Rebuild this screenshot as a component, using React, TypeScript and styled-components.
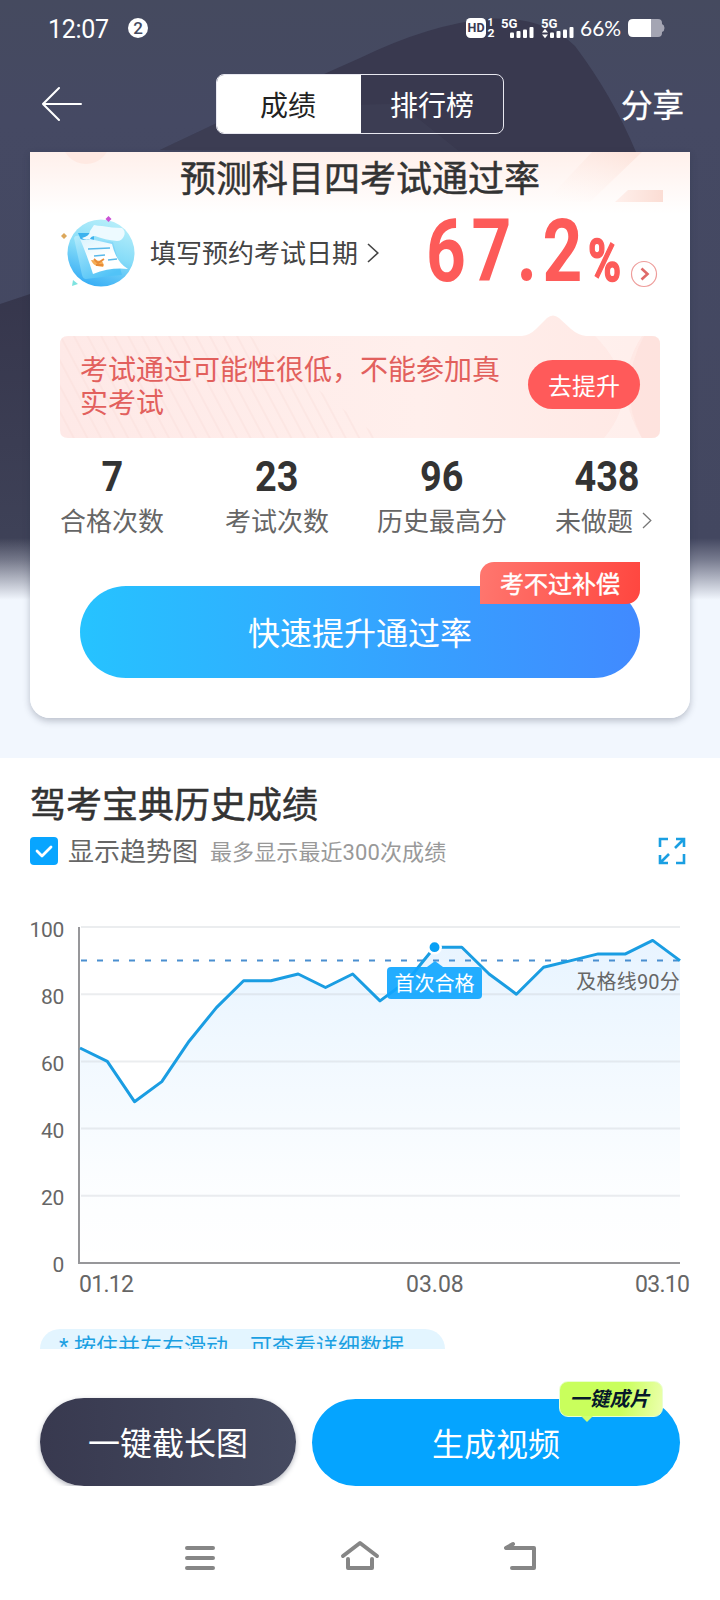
import React from "react";
import styled, { createGlobalStyle } from "styled-components";

const GlobalStyle = createGlobalStyle`
  * { box-sizing: border-box; }
  body {
    margin: 0;
    background: #fff;
    font-family: Roboto, "Noto Sans CJK SC", sans-serif;
    color: #333;
  }
  svg { display: block; flex: none; }
`;

const Screen = styled.div`
  width: 720px;
  height: 1600px;
  display: flex;
  flex-direction: column;
  overflow: hidden;
  background: #fff;
`;

/* ---------- hero ---------- */

const Hero = styled.section`
  position: relative;
  flex: none;
  height: 758px;
  background: #f2f7fe;
`;

const Backdrop = styled.svg`
  position: absolute;
  left: 0;
  top: 0;
`;

const HeroContent = styled.div`
  position: relative;
  display: flex;
  flex-direction: column;
`;

const StatusBar = styled.div`
  display: flex;
  align-items: center;
  justify-content: space-between;
  height: 56px;
  padding: 0 55px 0 48px;
  color: #fff;
`;

const StatusSide = styled.div`
  display: flex;
  align-items: center;
`;

const Clock = styled.span`
  font-size: 25px;
  line-height: 30px;
  width: 80px;
  letter-spacing: -0.3px;
  padding-top: 3px;
`;

const Counter = styled.span`
  width: 20px;
  height: 20px;
  border-radius: 50%;
  background: #fff;
  color: #454a60;
  font-size: 17px;
  line-height: 20px;
  font-weight: 500;
  text-align: center;
`;

const BatteryText = styled.span`
  font-family: Lato, sans-serif;
  font-size: 21px;
  line-height: 26px;
  width: 48px;
  margin-left: 6px;
`;

const NavBar = styled.header`
  display: flex;
  align-items: center;
  height: 96px;
  padding: 0 36px 0 42px;
  color: #fff;
`;

const Segmented = styled.div`
  display: flex;
  width: 288px;
  height: 60px;
  margin: 0 auto 0 133px;
  border: 1px solid #e8e8f0;
  border-radius: 8px;
  overflow: hidden;
`;

const Segment = styled.button<{ $active?: boolean }>`
  width: ${(p) => (p.$active ? 144 : 142)}px;
  flex: none;
  border: 0;
  padding: 0 ${(p) => (p.$active ? 2 : 0)}px 0 0;
  background: ${(p) => (p.$active ? "#fff" : "transparent")};
  color: ${(p) => (p.$active ? "#222" : "#fff")};
  font: 400 28px/58px "Noto Sans CJK SC", sans-serif;
`;

const Share = styled.span`
  padding-bottom: 2px;
  font: 400 31.500px/48px "Noto Sans CJK SC", sans-serif;
  -webkit-text-stroke: 0.3px #fff;
`;

const Card = styled.div`
  position: relative;
  display: flex;
  flex-direction: column;
  width: 660px;
  height: 566px;
  margin: 0 auto;
  background: linear-gradient(#fff0eb 0, #fff 62px);
  border-radius: 0 0 20px 20px;
  box-shadow: 0 3px 7px rgba(40, 45, 70, 0.28);
`;

const CardArt = styled.svg`
  position: absolute;
  left: 0;
  top: 0;
`;

const CardTitle = styled.h1`
  position: relative;
  margin: 0;
  height: 50px;
  font: 400 36px/48px "Noto Sans CJK SC", sans-serif;
  text-align: center;
  color: #333;
  -webkit-text-stroke: 0.5px #333;
`;

const RateRow = styled.div`
  display: flex;
  align-items: center;
  height: 96px;
  padding: 6px 32px 0 30px;
`;

const DateLink = styled.span`
  flex: none;
  font: 400 26px/40px "Noto Sans CJK SC", sans-serif;
  white-space: nowrap;
  color: #444;
  margin: 0 9px 2px 14px;
`;

const Rate = styled.div`
  display: flex;
  align-items: baseline;
  flex: none;
  width: 204px;
  height: 80px;
  margin: 0 0 4px 47px;
  color: #fd5b59;
  font-weight: 700;
`;

const RateDigits = styled.span`
  width: 162px;
  font-size: 88px;
  line-height: 80px;
  letter-spacing: 7px;
  white-space: nowrap;
  transform: scaleX(0.79);
  transform-origin: 0 50%;
`;

const RateUnit = styled.span`
  width: 36px;
  font-size: 59px;
  line-height: 60px;
  transform: scaleX(0.76);
  transform-origin: 0 50%;
  -webkit-text-stroke: 1.5px #fd5b59;
`;

const DetailIcon = styled.svg`
  margin-top: 42px;
`;

const Notice = styled.div`
  position: relative;
  display: flex;
  align-items: center;
  justify-content: space-between;
  height: 102px;
  margin: 38px 30px 0;
  padding: 0 20px;
`;

const NoticeArt = styled.svg`
  position: absolute;
  left: 0;
  top: -22px;
`;

const NoticeText = styled.p`
  position: relative;
  margin: 0 0 4px;
  width: 424px;
  font: 400 28px/33px "Noto Sans CJK SC", sans-serif;
  color: #e2605d;
`;

const ImproveButton = styled.button`
  position: relative;
  width: 112px;
  height: 49px;
  margin-top: -5px;
  padding: 0;
  border: 0;
  border-radius: 25px;
  background: #ff5a5a;
  color: #fff;
  font: 400 24px/49px "Noto Sans CJK SC", sans-serif;
`;

const Stats = styled.div`
  display: grid;
  grid-template-columns: repeat(4, 165px);
  height: 124px;
  padding-top: 13px;
`;

const Stat = styled.div<{ $shift?: boolean }>`
  display: flex;
  flex-direction: column;
  align-items: center;
  padding-right: ${(p) => (p.$shift ? 0 : 1)}px;
`;

const StatValue = styled.span`
  font-size: 43px;
  line-height: 50px;
  font-weight: 700;
  color: #333;
  transform: scaleX(0.88);
`;

const StatLabel = styled.span<{ $link?: boolean }>`
  display: flex;
  align-items: center;
  gap: 9px;
  margin-right: ${(p) => (p.$link ? 8 : 0)}px;
  font: 400 26px/38px "Noto Sans CJK SC", sans-serif;
  color: #666;
`;

const BoostButton = styled.button`
  position: relative;
  width: 560px;
  height: 92px;
  margin: 24px 50px 0;
  padding: 0 0 2px;
  border: 0;
  border-radius: 46px;
  background: linear-gradient(90deg, #26c3ff, #418aff);
  color: #fff;
  font: 400 32px/90px "Noto Sans CJK SC", sans-serif;
`;

const RefundTag = styled.span`
  position: absolute;
  right: 0;
  top: -24px;
  width: 160px;
  height: 42px;
  border-radius: 14px 0 14px 0;
  background: linear-gradient(100deg, #ff776f, #ff463f);
  font-size: 24px;
  line-height: 41px;
  -webkit-text-stroke: 0.4px #fff;
`;

/* ---------- history ---------- */

const History = styled.section`
  flex: none;
  height: 591px;
  padding: 21px 29px 0 30px;
  overflow: hidden;
`;

const HistoryTitle = styled.h2`
  margin: 0;
  font: 400 36px/46px "Noto Sans CJK SC", sans-serif;
  color: #333;
  -webkit-text-stroke: 0.5px #333;
`;

const OptionRow = styled.div`
  display: flex;
  align-items: center;
  height: 28px;
  margin-top: 12px;
  padding-right: 5px;
`;

const Checkbox = styled.span`
  display: flex;
  align-items: center;
  justify-content: center;
  width: 28px;
  height: 28px;
  border-radius: 4px;
  background: #08a5ff;
`;

const OptionLabel = styled.span`
  margin: 0 12px 2px 10px;
  font: 400 26px/28px "Noto Sans CJK SC", sans-serif;
  color: #666;
`;

const OptionNote = styled.span`
  margin-right: auto;
  padding-top: 3px;
  font-size: 22px;
  line-height: 28px;
  letter-spacing: 0.1px;
  color: #999;
`;

const Chart = styled.div`
  display: flex;
  gap: 14px;
  height: 350px;
  margin-top: 53px;
`;

const ScaleLabels = styled.div`
  width: 34px;
  padding-top: 1px;
`;

const ScaleLabel = styled.div`
  display: flex;
  justify-content: flex-end;
  height: 67.1px;
  font-size: 21px;
  line-height: 22px;
  color: #666;
  letter-spacing: -0.3px;
`;

const Plot = styled.div`
  position: relative;
  width: 604px;
  padding-top: 7px;
`;

const PassTip = styled.span`
  position: absolute;
  left: 309px;
  top: 49px;
  width: 95px;
  height: 32px;
  border-radius: 4px;
  background: rgba(16, 166, 255, 0.92);
  color: #fff;
  font: 400 20px/32px "Noto Sans CJK SC", sans-serif;
  text-align: center;

  &::before {
    content: "";
    position: absolute;
    left: 40px;
    top: -6px;
    border: 8px solid transparent;
    border-top: 0;
    border-bottom: 6px solid rgba(16, 166, 255, 0.92);
  }
`;

const PassLabel = styled.span`
  position: absolute;
  right: 2px;
  top: 51px;
  font-size: 20px;
  line-height: 26px;
  letter-spacing: 0.2px;
  color: #666;
`;

const Dates = styled.div`
  display: flex;
  margin: 2px -10px 0 49px;
  font-size: 23px;
  line-height: 30px;
  color: #666;
`;

const DateMark = styled.span<{ $width: number; $tight?: boolean }>`
  flex: none;
  width: ${(p) => p.$width}px;
  letter-spacing: ${(p) => (p.$tight ? -0.7 : 0)}px;
`;

const Hint = styled.div`
  width: 405px;
  height: 40px;
  margin: 29px 0 0 10px;
  padding-left: 19px;
  border-radius: 20px;
  background: #e3f5ff;
  color: #1ba0e2;
  font-size: 22px;
  line-height: 35px;
  white-space: pre;
`;

/* ---------- bottom ---------- */

const Actions = styled.div`
  display: flex;
  flex: none;
  align-items: flex-end;
  gap: 16px;
  height: 137px;
  padding: 0 40px;
  overflow: hidden;
`;

const ActionButton = styled.button<{ $primary?: boolean }>`
  position: relative;
  width: ${(p) => (p.$primary ? 368 : 256)}px;
  height: ${(p) => (p.$primary ? 87 : 88)}px;
  padding: 0 0 ${(p) => (p.$primary ? 1 : 3)}px;
  border: 0;
  border-radius: 44px;
  background: ${(p) =>
    p.$primary ? "#05a4ff" : "linear-gradient(90deg, #38394f, #454a60)"};
  box-shadow: ${(p) => (p.$primary ? "none" : "0 2px 5px rgba(40, 45, 70, 0.35)")};
  color: #fff;
  font: 400 32px/84px "Noto Sans CJK SC", sans-serif;
`;

const ClipTag = styled.span`
  position: absolute;
  left: 247px;
  top: -18px;
  width: 104px;
  height: 36px;
  padding-right: 3px;
  border: 1px solid #eaffd0;
  border-radius: 9px;
  background: linear-gradient(100deg, #c9ff5c 60%, #ecffae);
  color: #06182a;
  font: italic 700 20px/32px "Noto Sans CJK SC", sans-serif;

  &::after {
    content: "";
    position: absolute;
    left: 21px;
    top: 34px;
    border: 6px solid transparent;
    border-bottom: 0;
    border-top-color: #cfff70;
  }
`;

const SystemNav = styled.nav`
  display: flex;
  justify-content: center;
  gap: 120px;
  padding-top: 52px;
`;

const SignalIcons = () => (
  <svg width="110" height="24" viewBox="464 16 110 24" fill="#fff" fontFamily="Roboto" fontWeight="700">
    <rect x="466" y="18" width="20" height="20" rx="4.5" />
    <text x="467.6" y="32.3" fontSize="12" fill="#3a3b52" textLength="17" lengthAdjust="spacingAndGlyphs">HD</text>
    <text x="487.5" y="26" fontSize="10.5">1</text>
    <text x="487.5" y="37" fontSize="11" textLength="7" lengthAdjust="spacingAndGlyphs">2</text>
    <text x="501" y="27.5" fontSize="12.5" textLength="16.5" lengthAdjust="spacingAndGlyphs">5G</text>
    <text x="541" y="27.5" fontSize="12.5" textLength="16.5" lengthAdjust="spacingAndGlyphs">5G</text>
    {[510, 550].map((x) => (
      <g key={x}>
        <rect x={x} y="32.500" width="4" height="5.500" rx="1" />
        <rect x={x + 6.5} y="31" width="4" height="7" rx="1" />
        <rect x={x + 13} y="29.5" width="4" height="8.5" rx="1" />
        <rect x={x + 19.5} y="27" width="4" height="11" rx="1" />
      </g>
    ))}
    <path d="M542 32.5l3-3.7 3 3.7zM542 34.5h6l-3 3.7z" />
  </svg>
);

const BatteryIcon = () => (
  <svg width="37" height="18" viewBox="0 0 37 18">
    <path d="M5 0h25q4 0 4 4v1q2.500 1 2.500 4t-2.500 4v1q0 4-4 4H5z" fill="#a4a5b3" />
    <path d="M5 0h18v18H5q-5 0-5-5V5q0-5 5-5z" fill="#fff" />
  </svg>
);

const Chevron = ({ w, h, color, stroke }: { w: number; h: number; color: string; stroke: number }) => (
  <svg width={w} height={h} fill="none" stroke={color} strokeWidth={stroke}>
    <path d={`M1 1L${w - 1.2} ${h / 2}L1 ${h - 1}`} />
  </svg>
);

const ExamIcon = () => (
  <svg width="76" height="76" viewBox="60 215 76 76">
    <defs>
      <linearGradient id="disc" x1="0.7" y1="0" x2="0.35" y2="1">
        <stop offset="0" stopColor="#b9effa" />
        <stop offset="0.5" stopColor="#86dcf8" />
        <stop offset="1" stopColor="#36adf5" />
      </linearGradient>
      <linearGradient id="pad" x1="0" y1="0" x2="0.6" y2="1">
        <stop offset="0" stopColor="#b5ecfb" />
        <stop offset="1" stopColor="#52c3f7" />
      </linearGradient>
      <linearGradient id="sheet" x1="0" y1="0" x2="0.5" y2="1">
        <stop offset="0" stopColor="#d9f3fe" />
        <stop offset="0.6" stopColor="#fff" />
      </linearGradient>
    </defs>
    <circle cx="101" cy="253" r="33.500" fill="url(#disc)" />
    <path d="M74 238q1-3 5-2l34 6 9 33q-14 1-36 4-3 0-4-4z" fill="url(#pad)" />
    <path d="M78 233h16v7H81z" fill="#3bb2ee" />
    <path d="M80 239q6 2 10 0l22 5q4 18 16 25-17-2-35 5-6-19-13-35z" fill="url(#sheet)" />
    <path d="M94 225q4 1 8 1 10 2 20 2 4 3 2 8-2 5-7 5-12-1-22-5-4 0-5 3-5 2-8-1 8-2 8-7 2-3 4-6z" fill="#edfaff" />
    <path d="M88 249l22-1M94 256l11-1M108 260l9-1" stroke="#59b9ea" strokeWidth="1.6" fill="none" />
    <path d="M91 260l11 1 2 4-1 2-6-1q-4-1-6-6z" fill="#f6ad55" />
    <path d="M94 259l4 4 6-4M96 265h7" stroke="#e88c38" strokeWidth="1.800" fill="none" />
    <path d="M108.500 216l3 3-3 3-3-3z" fill="#cb52d4" />
    <path d="M64 233l3 3-3 3-3-3z" fill="#dca75b" />
    <path d="M73 280l5 4-6 2z" fill="#7ee3e0" />
  </svg>
);

const scores = [64, 60, 48, 54, 66, 76, 84, 84, 86, 82, 86, 78, 84, 94, 94, 86, 80, 88, 90, 92, 92, 96, 90];
const toX = (i: number) => 2 + (i * 600) / 22;
const toY = (v: number) => 338 - v * 3.36;
const trend = scores.map((v, i) => `${toX(i).toFixed(1)},${toY(v).toFixed(1)}`).join(" ");

const TrendPlot = () => (
  <svg width="604" height="342">
    <defs>
      <linearGradient id="fill" x1="0" y1="0" x2="0" y2="1">
        <stop offset="0" stopColor="#1890ff" stopOpacity="0.1" />
        <stop offset="0.75" stopColor="#1898ff" stopOpacity="0.015" />
        <stop offset="1" stopColor="#1898ff" stopOpacity="0" />
      </linearGradient>
    </defs>
    <polygon points={`2,338 ${trend} 602,338`} fill="url(#fill)" />
    {[100, 80, 60, 40, 20].map((v) => (
      <line key={v} x1="3" x2="602" y1={toY(v)} y2={toY(v)} stroke="#c8ccd2" strokeOpacity="0.36" strokeWidth="2" />
    ))}
    <line x1="3" x2="602" y1="35.600" y2="35.600" stroke="#4a8fd0" strokeWidth="2" strokeDasharray="6 10" />
    <path d="M1 2V338H602" fill="none" stroke="#97979a" strokeWidth="2" />
    <polyline points={trend} fill="none" stroke="#1a9de2" strokeWidth="3" strokeLinejoin="round" />
    <circle cx={toX(13)} cy={toY(94)} r="6.200" fill="#08a0f5" stroke="#fff" strokeWidth="2.500" />
  </svg>
);

const stats = [
  { value: "7", label: "合格次数" },
  { value: "23", label: "考试次数" },
  { value: "96", label: "历史最高分" },
  { value: "438", label: "未做题", more: true },
];

export default function App() {
  return (
    <Screen>
      <GlobalStyle />
      <Hero>
        <Backdrop width="720" height="600">
          <defs>
            <linearGradient id="base" x1="0" y1="0" x2="0" y2="1">
              <stop offset="0" stopColor="#454a5f" />
              <stop offset="0.2" stopColor="#454963" />
              <stop offset="0.9" stopColor="#434760" />
            </linearGradient>
            <linearGradient id="shade" x1="0" y1="0" x2="0" y2="1">
              <stop offset="0" stopColor="#36364c" />
              <stop offset="1" stopColor="#40445a" />
            </linearGradient>
            <linearGradient id="fade" x1="0" y1="0" x2="0" y2="1">
              <stop offset="0" stopColor="#f2f5fd" stopOpacity="0" />
              <stop offset="0.35" stopColor="#f2f5fd" stopOpacity="0.3" />
              <stop offset="1" stopColor="#f2f7fe" />
            </linearGradient>
          </defs>
          <rect width="720" height="600" fill="url(#base)" />
          <path d="M160 150L215 124Q290 89 360 58Q430 24 490 18.500Q545 17 575 46Q612 95 636 152z" fill="#39394f" />
          <path d="M160 150L215 124Q290 104 400 104L460 152z" fill="#3f4157" fillOpacity="0.6" />
          <path d="M0 304L60 284V600H0z" fill="url(#shade)" />
          <rect y="538" width="720" height="62" fill="url(#fade)" />
        </Backdrop>
        <HeroContent>
          <StatusBar>
            <StatusSide>
              <Clock>12:07</Clock>
              <Counter>2</Counter>
            </StatusSide>
            <StatusSide>
              <SignalIcons />
              <BatteryText>66%</BatteryText>
              <BatteryIcon />
            </StatusSide>
          </StatusBar>
          <NavBar>
            <svg width="41" height="36" viewBox="0 0 41 36" fill="none" stroke="#fff" strokeWidth="2" strokeLinecap="round">
              <path d="M1 18H39M17 2L1 18L17 34" />
            </svg>
            <Segmented>
              <Segment $active>成绩</Segment>
              <Segment>排行榜</Segment>
            </Segmented>
            <Share>分享</Share>
          </NavBar>
          <Card>
            <CardArt width="660" height="70">
              <defs>
                <linearGradient id="beam" x1="0.8" y1="0" x2="0.2" y2="1">
                  <stop offset="0" stopColor="#fde5dd" />
                  <stop offset="1" stopColor="#fff6f3" stopOpacity="0" />
                </linearGradient>
                <linearGradient id="bar">
                  <stop offset="0" stopColor="#fff0ec" />
                  <stop offset="1" stopColor="#fbddd4" />
                </linearGradient>
              </defs>
              <circle cx="56" cy="-12" r="24" fill="#ffe9e2" />
              <path d="M562 0h50l-52 50h-45z" fill="url(#beam)" />
              <path d="M598 38h35v12h-48z" fill="url(#bar)" />
            </CardArt>
            <CardTitle>预测科目四考试通过率</CardTitle>
            <RateRow>
              <ExamIcon />
              <DateLink>填写预约考试日期</DateLink>
              <Chevron w={12} h={20} color="#444" stroke={1.6} />
              <Rate>
                <RateDigits>67.2</RateDigits>
                <RateUnit>%</RateUnit>
              </Rate>
              <DetailIcon width="28" height="28" fill="none">
                <circle cx="14" cy="14" r="12.500" stroke="#ee9d9b" strokeWidth="1.200" />
                <path d="M11.500 8.500l6 5.500-6 5.500" stroke="#df6a68" strokeWidth="2.600" />
              </DetailIcon>
            </RateRow>
            <Notice>
              <NoticeArt width="600" height="124">
                <defs>
                  <linearGradient id="notice">
                    <stop offset="0" stopColor="#fee9e7" />
                    <stop offset="0.6" stopColor="#ffefec" />
                    <stop offset="1" stopColor="#ffe8e4" />
                  </linearGradient>
                  <pattern id="lines" width="12" height="20" patternUnits="userSpaceOnUse" patternTransform="rotate(-28)">
                    <path d="M2 0V20" stroke="#f8dcd9" strokeWidth="1.500" />
                  </pattern>
                  <clipPath id="box">
                    <rect y="22" width="600" height="102" rx="8" />
                  </clipPath>
                </defs>
                <path
                  d="M8 22H462Q470 21 476 15L487 4Q493 -1 499 4L511 15Q518 21 526 22H592Q600 22 600 30V116Q600 124 592 124H8Q0 124 0 116V30Q0 22 8 22z"
                  fill="url(#notice)"
                />
                <g clipPath="url(#box)">
                  <path d="M0 22H190L320 124H0z" fill="url(#lines)" fillOpacity="0.5" />
                  <path d="M535 22h47q-32 50 0 102h-38q42-50-9-102z" fill="#fff5f3" fillOpacity="0.500" />
                  <path d="M584 22h16v102h-18q-26-50 2-102z" fill="#fde0da" fillOpacity="0.600" />
                </g>
              </NoticeArt>
              <NoticeText>考试通过可能性很低，不能参加真实考试</NoticeText>
              <ImproveButton>去提升</ImproveButton>
            </Notice>
            <Stats>
              {stats.map((s) => (
                <Stat key={s.label} $shift={s.more}>
                  <StatValue>{s.value}</StatValue>
                  <StatLabel $link={s.more}>
                    {s.label}
                    {s.more && <Chevron w={10} h={17} color="#777" stroke={1.3} />}
                  </StatLabel>
                </Stat>
              ))}
            </Stats>
            <BoostButton>
              快速提升通过率
              <RefundTag>考不过补偿</RefundTag>
            </BoostButton>
          </Card>
        </HeroContent>
      </Hero>

      <History>
        <HistoryTitle>驾考宝典历史成绩</HistoryTitle>
        <OptionRow>
          <Checkbox>
            <svg width="20" height="16" fill="none" stroke="#fff" strokeWidth="2.800" strokeLinecap="round" strokeLinejoin="round">
              <path d="M3 8L8 13L17 4" />
            </svg>
          </Checkbox>
          <OptionLabel>显示趋势图</OptionLabel>
          <OptionNote>最多显示最近300次成绩</OptionNote>
          <svg width="28" height="28" fill="none" stroke="#1a9fe2" strokeWidth="2.600">
            <path d="M2 10V2H10M18 2H26V10M26 2L17 11M2 18V26H10M2 26L11 17M26 17V26H18" />
          </svg>
        </OptionRow>
        <Chart>
          <ScaleLabels>
            {[100, 80, 60, 40, 20, 0].map((v) => (
              <ScaleLabel key={v}>{v}</ScaleLabel>
            ))}
          </ScaleLabels>
          <Plot>
            <TrendPlot />
            <PassTip>首次合格</PassTip>
            <PassLabel>及格线90分</PassLabel>
          </Plot>
        </Chart>
        <Dates>
          <DateMark $width={327} $tight>01.12</DateMark>
          <DateMark $width={229}>03.08</DateMark>
          <DateMark $width={60} $tight>03.10</DateMark>
        </Dates>
        <Hint>* 按住并左右滑动，可查看详细数据。</Hint>
      </History>

      <Actions>
        <ActionButton>一键截长图</ActionButton>
        <ActionButton $primary>
          生成视频
          <ClipTag>一键成片</ClipTag>
        </ActionButton>
      </Actions>
      <SystemNav>
        <svg width="40" height="40" stroke="#868686" strokeWidth="4" strokeLinecap="round">
          <path d="M7 10H33M7 20H33M7 30H33" />
        </svg>
        <svg width="40" height="40" fill="none" stroke="#868686" strokeWidth="4" strokeLinecap="round" strokeLinejoin="round">
          <path d="M3 18L20 5L37 18M8 21V30H32V21" />
        </svg>
        <svg width="40" height="40" fill="none" stroke="#868686" strokeWidth="4" strokeLinecap="round" strokeLinejoin="round">
          <path d="M13 6L6 10H34V30H12" />
        </svg>
      </SystemNav>
    </Screen>
  );
}
